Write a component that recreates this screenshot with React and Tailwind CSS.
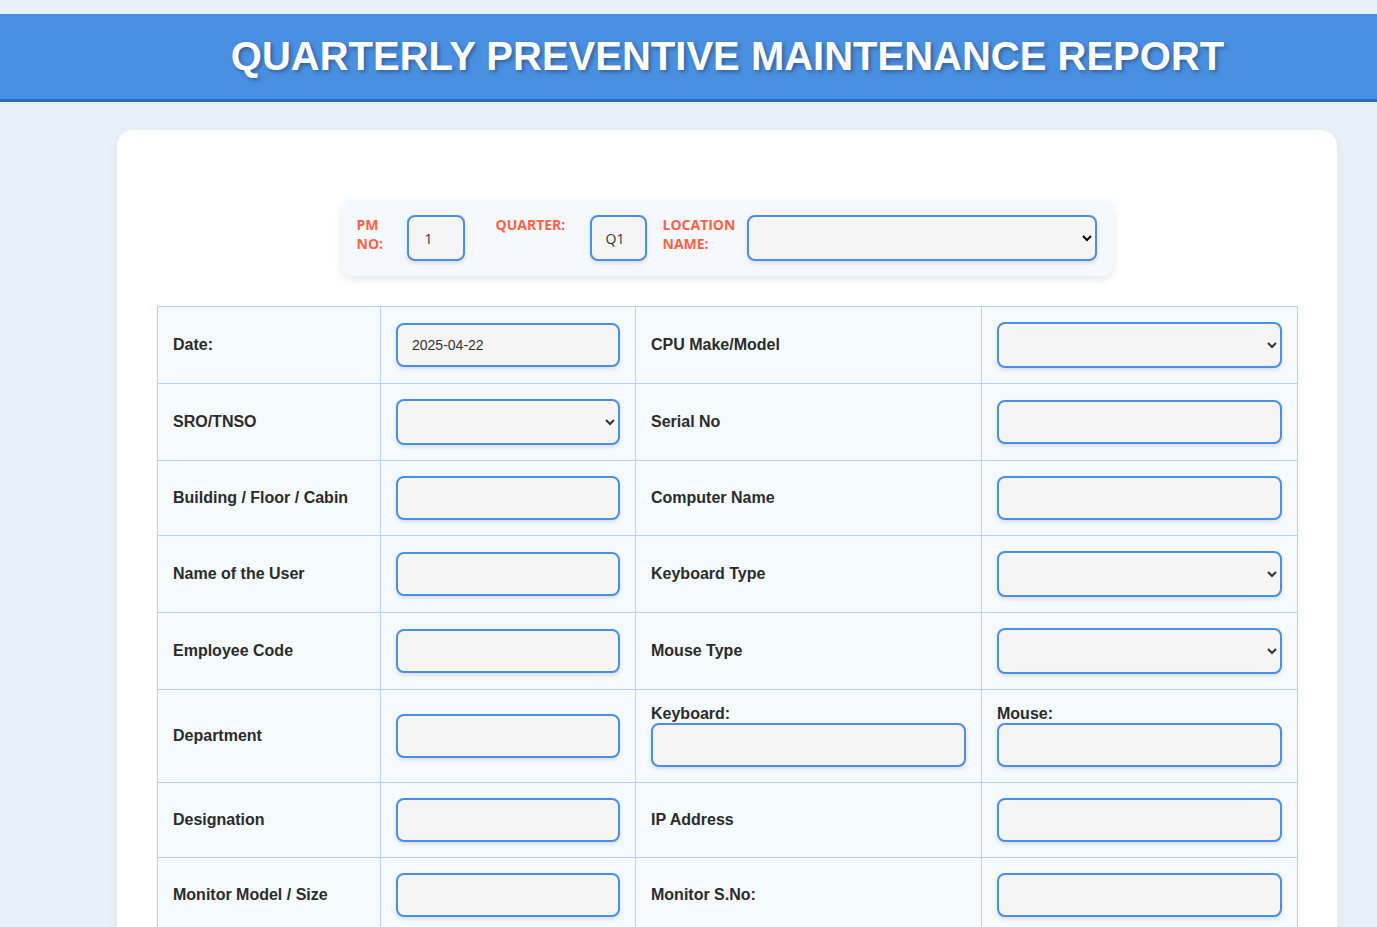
import React from 'react';

const inputCls =
  'block w-full h-[44px] rounded-lg border-2 border-[#4a90e2] bg-[#f5f5f5] px-[14px] text-[14px] text-[#333] shadow-[0_2px_4px_rgba(0,0,0,0.12)] outline-none';
const selectCls =
  'block w-full h-[46px] rounded-lg border-2 border-[#4a90e2] bg-[#f5f5f5] px-[10px] text-[14px] text-[#333] shadow-[0_2px_4px_rgba(0,0,0,0.12)] outline-none';

function Field({ type, value }) {
  if (type === 'select') {
    return (
      <select className={selectCls} defaultValue="">
        <option value=""></option>
      </select>
    );
  }
  return <input type="text" className={inputCls} defaultValue={value || ''} />;
}

const rows = [
  { a: 'Date:', at: 'input', av: '2025-04-22', b: 'CPU Make/Model', bt: 'select' },
  { a: 'SRO/TNSO', at: 'select', b: 'Serial No', bt: 'input' },
  { a: 'Building / Floor / Cabin', at: 'input', b: 'Computer Name', bt: 'input' },
  { a: 'Name of the User', at: 'input', b: 'Keyboard Type', bt: 'select' },
  { a: 'Employee Code', at: 'input', b: 'Mouse Type', bt: 'select' },
  { a: 'Department', at: 'input', split: true },
  { a: 'Designation', at: 'input', b: 'IP Address', bt: 'input' },
  { a: 'Monitor Model / Size', at: 'input', b: 'Monitor S.No:', bt: 'input' },
];

const td = 'border border-[#b3d4f7] bg-[#f5faff] p-[15px] align-middle';
const lbl = 'text-[16px] font-bold text-[#2b2b2b]';

export default function App() {
  return (
    <div
      className="min-h-screen bg-[#e8f1f9] pt-[14px] pb-10"
      style={{ fontFamily: '"Liberation Sans", Arial, sans-serif' }}
    >
      {/* header */}
      <header className="h-[88px] bg-[#4a90e2] border-b-[3px] border-[#2d6dbd] pl-[78px] flex items-center justify-center">
        <h1 className="-mt-[2px] text-[40px] font-bold text-white leading-none [text-shadow:2px_2px_4px_rgba(0,0,0,0.35)]">
          QUARTERLY PREVENTIVE MAINTENANCE REPORT
        </h1>
      </header>

      <div className="ml-[117px] mt-[28px] w-[1220px] rounded-2xl bg-white p-10 pt-[70px] shadow-[0_4px_12px_rgba(0,0,0,0.06)]">
        {/* top bar */}
        <div className="flex justify-center">
          <div
            className="flex items-start gap-4 rounded-[10px] bg-[#f5f9fd] p-[15px] pr-4 shadow-[0_3px_8px_rgba(0,0,0,0.1)]"
            style={{ fontFamily: '"Open Sans", "Noto Sans", sans-serif' }}
          >
            <div className="w-[34px] text-[14px] font-bold leading-[19px] text-[#ff5f45]">PM NO:</div>
            <input
              type="text"
              defaultValue="1"
              className="h-[46px] w-[58px] rounded-lg border-2 border-[#4a90e2] bg-[#f5f5f5] px-4 text-[14px] text-[#333] shadow-[0_2px_4px_rgba(0,0,0,0.12)] outline-none"
            />
            <div className="ml-[15px] w-[78px] text-[14px] font-bold leading-[19px] text-[#ff5f45]">QUARTER:</div>
            <input
              type="text"
              defaultValue="Q1"
              className="h-[46px] w-[57px] rounded-lg border-2 border-[#4a90e2] bg-[#f5f5f5] px-[14px] text-[14px] text-[#333] shadow-[0_2px_4px_rgba(0,0,0,0.12)] outline-none"
            />
            <div className="w-[68px] text-[14px] font-bold leading-[19px] text-[#ff5f45]">LOCATION NAME:</div>
            <select
              defaultValue=""
              className="h-[46px] w-[350px] rounded-lg border-2 border-[#4a90e2] bg-[#f5f5f5] px-[10px] text-[14px] shadow-[0_2px_4px_rgba(0,0,0,0.12)] outline-none"
            >
              <option value=""></option>
            </select>
          </div>
        </div>

        {/* details table */}
        <table className="mt-[30px] w-[1140px] table-fixed border-collapse">
          <colgroup>
            <col className="w-[223px]" />
            <col className="w-[255px]" />
            <col className="w-[346px]" />
            <col className="w-[316px]" />
          </colgroup>
          <tbody>
            {rows.map((r) => (
              <tr key={r.a}>
                <td className={td}>
                  <span className={lbl}>{r.a}</span>
                </td>
                <td className={td}>
                  <Field type={r.at} value={r.av} />
                </td>
                {r.split ? (
                  <>
                    <td className={td}>
                      <div className={lbl + ' leading-[18px]'}>Keyboard:</div>
                      <Field type="input" />
                    </td>
                    <td className={td}>
                      <div className={lbl + ' leading-[18px]'}>Mouse:</div>
                      <Field type="input" />
                    </td>
                  </>
                ) : (
                  <>
                    <td className={td}>
                      <span className={lbl}>{r.b}</span>
                    </td>
                    <td className={td}>
                      <Field type={r.bt} />
                    </td>
                  </>
                )}
              </tr>
            ))}
          </tbody>
        </table>
      </div>
    </div>
  );
}
